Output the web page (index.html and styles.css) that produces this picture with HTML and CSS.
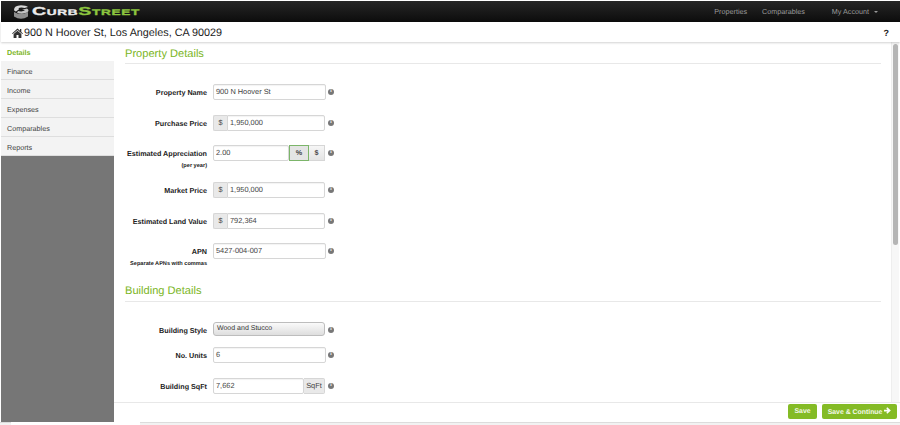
FILE: index.html
```html
<!DOCTYPE html>
<html lang="en">
<head>
<meta charset="utf-8">
<title>CurbStreet</title>
<link rel="stylesheet" href="styles.css">
</head>
<body>
<div class="app">
  <header class="navbar">
    <div class="brand">
      <svg class="logo-icon" width="19" height="16" viewBox="0 0 19 16">
        <path d="M2 8 L2 12.5 Q9 17 16 12.5 L16 8 Q9 12 2 8Z" fill="#8f8f8f"/>
        <path d="M2 6 Q2 1.5 9 1.2 Q14 1.2 16 3 L12.5 4 Q10 3.2 7.5 3.8 Q5.8 4.4 7 5.3 L4 7.5 Q2.4 7 2 6Z" fill="#d8d8d8"/>
        <path d="M6 7 Q10 8 13 6.6 Q12 5.8 10 5.8 L15 4.6 Q18 6.5 15 8.6 Q10 10.6 5 8.8Z" fill="#c4c4c4"/>
      </svg>
      <span class="wordmark">Curb<span class="accent">Street</span></span>
    </div>
    <nav class="nav-links">
      <a>Properties</a>
      <a>Comparables</a>
      <a class="account">My Account <span class="caret"></span></a>
    </nav>
  </header>
  <div class="address-bar">
    <h1>
      <svg class="home" width="11" height="10" viewBox="0 0 11 10"><path d="M5.5 0.5 L8 2.7 V1 H9.3 V3.9 L11 5.4 L10.3 6.1 L5.5 1.9 L0.7 6.1 L0 5.4Z M1.6 6.1 L5.5 2.8 L9.4 6.1 V10 H6.5 V7 H4.5 V10 H1.6Z" fill="#333"/></svg>
      900 N Hoover St, Los Angeles, CA 90029
    </h1>
    <span class="help">?</span>
  </div>
  <div class="workspace">
    <aside class="sidebar">
      <a class="side-item active">Details</a>
      <a class="side-item">Finance</a>
      <a class="side-item">Income</a>
      <a class="side-item">Expenses</a>
      <a class="side-item">Comparables</a>
      <a class="side-item">Reports</a>
    </aside>
    <div class="content">
      <main class="scroll">
        <div class="form">
          <h2 class="section">Property Details</h2>
          <div class="row first">
            <label>Property Name</label>
            <div class="field"><span class="input wide">900 N Hoover St</span></div>
            <i class="info wide-info">i</i>
          </div>
          <div class="row">
            <label>Purchase Price</label>
            <div class="field"><span class="addon left">$</span><span class="input">1,950,000</span></div>
            <i class="info">i</i>
          </div>
          <div class="row tall">
            <label>Estimated Appreciation<small>(per year)</small></label>
            <div class="field"><span class="input">2.00</span><span class="toggle on">%</span><span class="toggle">$</span></div>
            <i class="info">i</i>
          </div>
          <div class="row">
            <label>Market Price</label>
            <div class="field"><span class="addon left">$</span><span class="input">1,950,000</span></div>
            <i class="info">i</i>
          </div>
          <div class="row">
            <label>Estimated Land Value</label>
            <div class="field"><span class="addon left">$</span><span class="input">792,364</span></div>
            <i class="info">i</i>
          </div>
          <div class="row snug">
            <label>APN<small>Separate APNs with commas</small></label>
            <div class="field"><span class="input wide">5427-004-007</span></div>
            <i class="info wide-info">i</i>
          </div>
          <h2 class="section second">Building Details</h2>
          <div class="row first">
            <label>Building Style</label>
            <div class="field"><span class="select">Wood and Stucco</span></div>
            <i class="info wide-info">i</i>
          </div>
          <div class="row compact">
            <label>No. Units</label>
            <div class="field"><span class="input wide">6</span></div>
            <i class="info wide-info">i</i>
          </div>
          <div class="row">
            <label>Building SqFt</label>
            <div class="field"><span class="input">7,662</span><span class="addon right">SqFt</span></div>
            <i class="info">i</i>
          </div>
        </div>
        <div class="scrollbar"><div class="thumb"></div></div>
      </main>
      <footer class="actions">
        <button class="btn">Save</button>
        <button class="btn">Save &amp; Continue <svg width="7" height="7" viewBox="0 0 8 8"><path d="M0 3 H4 L2.6 1.4 L3.8 0.4 L7.8 4 L3.8 7.6 L2.6 6.6 L4 5 H0Z" fill="#fff"/></svg></button>
      </footer>
    </div>
  </div>
  <div class="bottom-strip"><div class="tab-edge"></div></div>
</div>
</body>
</html>
```
FILE: styles.css
```css
* { box-sizing: border-box; }
html, body { margin: 0; height: 100%; overflow: hidden; background: #fff; }
body { font-family: "Liberation Sans", Arial, sans-serif; color: #333; text-rendering: geometricPrecision; }
.app { width: 900px; height: 425px; padding: 1px 0 0 1px; display: flex; flex-direction: column; }

.navbar { height: 21px; flex: none; background: linear-gradient(#262626, #0c0c0c); display: flex; align-items: center; justify-content: space-between; padding-left: 11px; }
.brand { display: flex; align-items: center; gap: 1px; }
.logo-icon { display: block; }
.wordmark { font-family: "Liberation Sans", sans-serif; font-weight: 700; font-size: 11.5px; font-variant: small-caps; letter-spacing: .4px; color: #ececec; line-height: 14px; -webkit-text-stroke: .3px currentColor; transform: scaleX(1.7); transform-origin: left center; }
.accent { color: #8dc63f; }
.nav-links { display: flex; align-items: center; font-size: 7.2px; color: #9a9a9a; }
.nav-links a { margin-right: 15px; }
.nav-links .account { margin-left: 12px; margin-right: 22px; }
.caret { display: inline-block; width: 0; height: 0; border: 2.5px solid transparent; border-top-color: #9a9a9a; border-bottom: 0; margin-left: 3px; vertical-align: middle; }

.address-bar { height: 20px; flex: none; display: flex; align-items: center; justify-content: space-between; padding: 1px 11px 0; box-shadow: 0 1px 2px rgba(0,0,0,.18); position: relative; }
.address-bar h1 { margin: 0; font-size: 10.8px; font-weight: 400; color: #222; display: flex; align-items: center; gap: 1px; white-space: nowrap; }
.help { font-size: 9px; font-weight: 700; color: #222; }

.workspace { flex: none; height: 380px; display: flex; }
.sidebar { width: 113px; flex: none; background: #767676; font-size: 7.2px; }
.side-item { display: block; height: 19px; line-height: 21px; padding-left: 6px; background: #f3f3f3; border-bottom: 1px solid #dedede; color: #444; }
.side-item.active { background: #fff; color: #7ab51d; font-weight: 700; border-bottom: 0; }

.content { flex: 1; min-width: 0; display: flex; flex-direction: column; }
.scroll { flex: none; height: 360px; overflow: hidden; display: flex; }
.form { width: 767px; flex: none; padding: 0 0 0 11px; }
.scrollbar { width: 8px; margin-left: 10px; padding: 2px 1px 0; background: #f7f7f7; border-left: 1px solid #eee; }
.thumb { height: 201px; width: 5px; border-radius: 3px; background: #b5b5b5; }

.section { margin: 0; height: 22px; line-height: 24px; font-size: 11.1px; font-weight: 400; color: #7ab51d; border-bottom: 1px solid #e8e8e8; }
.section.second { margin-top: 21px; line-height: 23px; }

.row { display: flex; align-items: flex-start; height: 16px; margin-top: 15px; font-size: 7.2px; }
.row.first { margin-top: 20px; }
.row.tall { margin-bottom: 21px; margin-top: 14px; }
.row.compact { margin-top: 9px; }
.row.snug { margin-top: 14px; }
.tall + .row { margin-top: 0; }
label { width: 82px; flex: none; margin-right: 6px; text-align: right; font-weight: 700; color: #222; line-height: 17px; white-space: nowrap; }
label small { display: block; font-size: 5.6px; line-height: 9px; margin-top: 0; }
.field { display: flex; width: 112px; height: 16px; }
.input { flex: 1; min-width: 0; height: 16px; line-height: 14px; padding-left: 2px; border: 1px solid #d6d6d6; border-radius: 2px; background: #fff; color: #444; font-size: 7.4px; box-shadow: inset 0 1px 1px rgba(0,0,0,.05); }
.input.wide { flex: none; width: 113px; }
.addon { flex: none; height: 16px; line-height: 14px; text-align: center; background: #e9e9e9; border: 1px solid #d6d6d6; color: #444; font-size: 7.4px; }
.addon.left { width: 14px; border-radius: 2px 0 0 2px; border-right: 0; }
.addon.left + .input { border-radius: 0 2px 2px 0; padding-left: 2px; }
.addon.right { width: 21px; border-radius: 0 2px 2px 0; border-left: 0; }
.toggle { flex: none; width: 16px; height: 16px; line-height: 14px; text-align: center; font-weight: 700; background: linear-gradient(#f6f6f6, #e4e4e4); border: 1px solid #d6d6d6; border-left: 0; color: #444; font-size: 7.2px; }
.toggle.on { width: 20px; background: #e4e4e4; border: 1px solid #7cb56a; }
.select { width: 113px; height: 14px; line-height: 11px; padding-left: 3px; border: 1px solid #bdbdbd; border-radius: 3px; background: linear-gradient(#fafafa, #dedede); color: #333; font-size: 7px; }
.info { flex: none; width: 6px; height: 6px; margin: 5px 0 0 3px; border-radius: 50%; background: #777; color: #fff; font: 700 5px/6px "Liberation Serif", serif; text-align: center; }

.actions { flex: none; height: 20px; display: flex; justify-content: flex-end; align-items: center; gap: 5px; padding: 0 3px 2px 0; border-top: 1px solid #e8e8e8; background: #fff; }
.btn { height: 15px; padding: 0; border: 0; border-radius: 2px; background: #84bb25; color: #f4f9ea; font: 700 6.9px "Liberation Sans", Arial, sans-serif; white-space: nowrap; text-rendering: geometricPrecision; }
.btn:first-child { width: 29px; }
.btn:last-child { width: 75px; }
.bottom-strip { flex: none; height: 3px; border-top: 1px solid #dcdcdc; background: #f2f2f2; margin-left: -1px; position: relative; }
.tab-edge { position: absolute; left: 11px; top: -1px; width: 129px; height: 3px; background: #fff; }
```
